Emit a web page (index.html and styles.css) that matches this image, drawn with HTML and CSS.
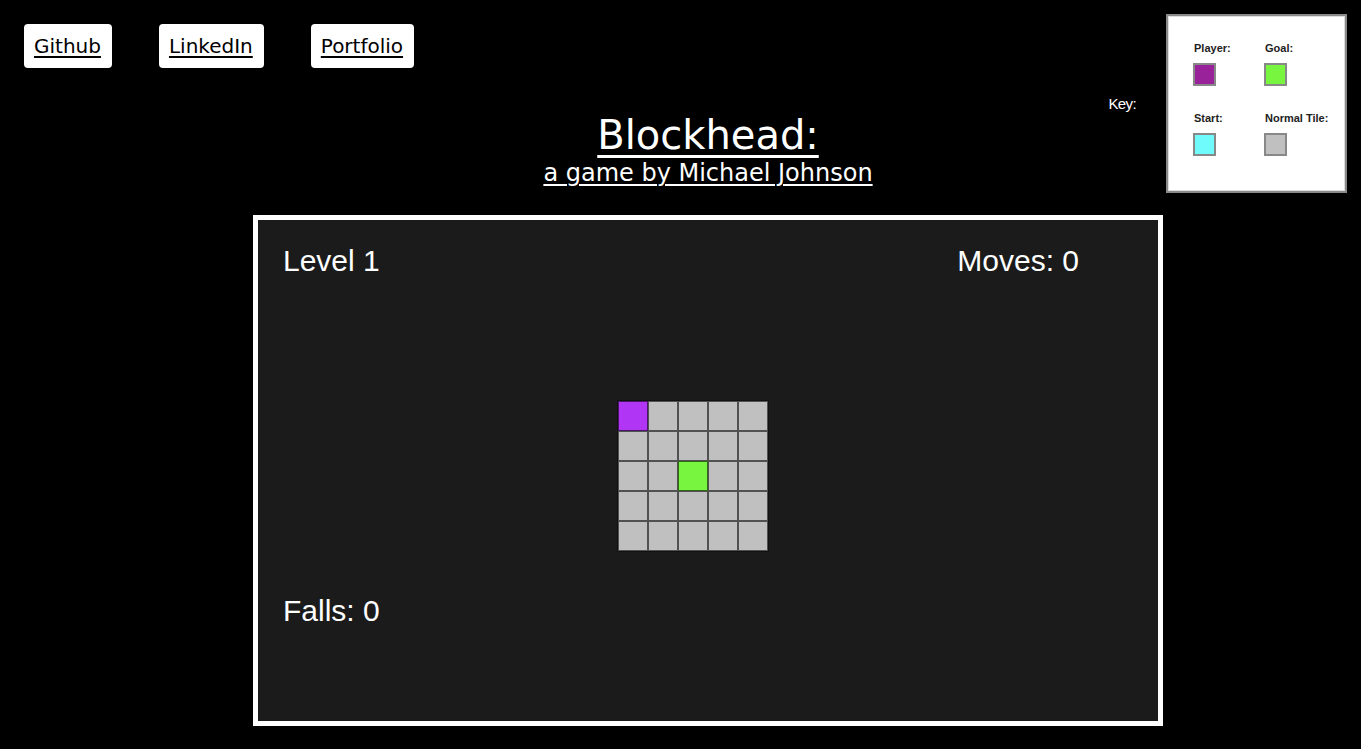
FILE: index.html
```html
<!DOCTYPE html>
<html>
<head>
<meta charset="utf-8">
<link rel="stylesheet" href="styles.css">
</head>
<body>
<nav class="links">
  <a class="link-btn" href="#">Github</a>
  <a class="link-btn" href="#">LinkedIn</a>
  <a class="link-btn" href="#">Portfolio</a>
</nav>
<aside class="key">
  <span class="key-label">Key:</span>
  <div class="key-box">
    <div class="key-item"><span class="key-name">Player:</span><span class="sw sw-player"></span></div>
    <div class="key-item"><span class="key-name">Goal:</span><span class="sw sw-goal"></span></div>
    <div class="key-item"><span class="key-name">Start:</span><span class="sw sw-start"></span></div>
    <div class="key-item"><span class="key-name">Normal Tile:</span><span class="sw sw-normal"></span></div>
  </div>
</aside>
<main class="main">
  <header class="title">
    <h1 class="title-main">Blockhead:</h1>
    <h2 class="title-sub">a game by Michael Johnson</h2>
  </header>
  <section class="frame">
    <div class="stats">
      <span>Level 1</span>
      <span>Moves: 0</span>
    </div>
    <div class="grid">
      <div class="tile player"></div><div class="tile"></div><div class="tile"></div><div class="tile"></div><div class="tile"></div>
      <div class="tile"></div><div class="tile"></div><div class="tile"></div><div class="tile"></div><div class="tile"></div>
      <div class="tile"></div><div class="tile"></div><div class="tile goal"></div><div class="tile"></div><div class="tile"></div>
      <div class="tile"></div><div class="tile"></div><div class="tile"></div><div class="tile"></div><div class="tile"></div>
      <div class="tile"></div><div class="tile"></div><div class="tile"></div><div class="tile"></div><div class="tile"></div>
    </div>
    <div class="falls">Falls: 0</div>
  </section>
</main>
</body>
</html>
```

FILE: styles.css
```css
html, body {
  margin: 0;
  padding: 0;
  background: #000;
}
body {
  position: relative;
  width: 1361px;
  height: 749px;
  overflow: hidden;
  font-family: "DejaVu Sans", sans-serif;
  color: #fff;
}
.links {
  display: flex;
  gap: 47px;
  padding: 24px 0 0 24px;
}
.link-btn {
  display: block;
  height: 44px;
  box-sizing: border-box;
  padding: 0 11px 0 10px;
  line-height: 44px;
  background: #fff;
  border-radius: 4px;
  color: #000;
  font-size: 20px;
  text-decoration: underline;
  text-underline-offset: 3px;
  text-decoration-thickness: 2px;
}
.key {
  position: absolute;
  top: 14px;
  right: 14px;
  display: flex;
  align-items: center;
  gap: 30px;
}
.key-label {
  font-family: "Liberation Sans", Arial, sans-serif;
  font-size: 15px;
  letter-spacing: -0.6px;
  color: #fff;
}
.key-box {
  width: 181px;
  height: 179px;
  box-sizing: border-box;
  background: #fff;
  border: 2px solid #8a8a8a;
  box-shadow: inset 0 0 0 1px #ddd;
  display: grid;
  grid-template-columns: 71px 70px;
  grid-auto-rows: 70px;
  padding: 26px 0 0 25px;
}
.key-item {
  display: flex;
  flex-direction: column;
  align-items: flex-start;
  gap: 9px;
}
.key-name {
  font-family: "Liberation Sans", Arial, sans-serif;
  font-weight: bold;
  font-size: 11px;
  line-height: 12px;
  color: #222;
  margin-left: 1px;
}
.sw {
  width: 23px;
  height: 23px;
  box-sizing: border-box;
  border: 2px solid #888;
}
.sw-player { background: #99229a; }
.sw-goal { background: #77f53f; }
.sw-start { background: #6ffbfb; }
.sw-normal { background: #c0c0c0; }

.main {
  width: 910px;
  margin: 0 0 0 253px;
}
.title {
  text-align: center;
  padding-top: 44px;
  height: 113px;
  box-sizing: border-box;
}
.title-main {
  margin: 0;
  font-weight: normal;
  font-size: 40px;
  line-height: 47px;
  text-decoration: underline;
  text-decoration-thickness: 3px;
  text-underline-offset: 6px;
}
.title-sub {
  margin: 0;
  font-weight: normal;
  font-size: 24px;
  line-height: 28px;
  text-decoration: underline;
  text-decoration-thickness: 2px;
  text-underline-offset: 3px;
}
.frame {
  margin-top: 34px;
  height: 511px;
  box-sizing: border-box;
  border: 5px solid #fff;
  background: #1b1b1b;
  font-family: "Liberation Sans", Arial, sans-serif;
  font-size: 30px;
  line-height: 34px;
  padding: 24px 79px 0 25px;
}
.stats {
  display: flex;
  justify-content: space-between;
}
.grid {
  margin: 123px 0 0 335px;
  display: grid;
  grid-template-columns: repeat(5, 30px);
  grid-auto-rows: 30px;
  width: 150px;
  box-shadow: 0 0 0 1px #111;
}
.tile {
  box-sizing: border-box;
  background: #c0c0c0;
  border: 1px solid rgba(0, 0, 0, 0.58);
}
.tile.player { background: #b035f5; }
.tile.goal { background: #77f53f; }
.falls {
  margin-top: 43px;
}
```
